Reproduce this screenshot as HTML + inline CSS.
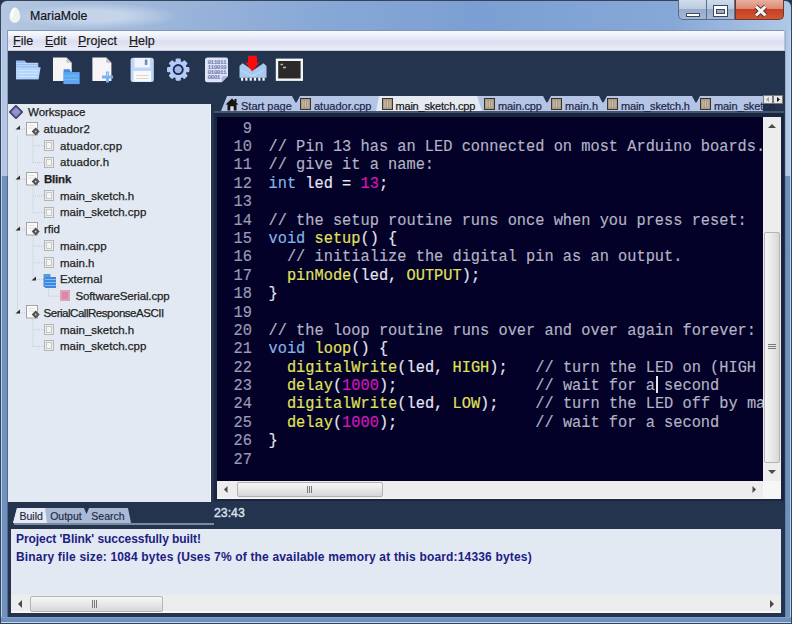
<!DOCTYPE html><html><head><meta charset="utf-8"><style>
*{margin:0;padding:0;box-sizing:border-box}
html,body{width:792px;height:624px;overflow:hidden;background:#24344f}
body{position:relative;font-family:"Liberation Sans",sans-serif}
.a{position:absolute}
.t{position:absolute;white-space:pre;line-height:16px}
#frame{left:0;top:0;width:792px;height:624px;background:linear-gradient(90deg,#b4c6e0 0%,#9cb6da 20%,#88a8d6 40%,#7c9fd3 60%,#86a8d8 85%,#b0c8e6 100%);border:1px solid #34445c;border-radius:7px 7px 0 0}
#sideL{left:1px;top:176px;width:7px;height:447px;background:linear-gradient(90deg,#b8d0f0 0,#b8d0f0 1px,#7292be 1.5px,#6e8ebb 5.5px,#56688a 6.5px)}
#sideLt{left:1px;top:30px;width:7px;height:146px;background:linear-gradient(90deg,#c4d6f0 0,#c4d6f0 1px,#b2c6e4 1.5px,#b6cae8 5.5px,#8898b8 6.5px)}
#sideR{left:785px;top:176px;width:6px;height:447px;background:linear-gradient(90deg,#56688a 0,#7292be 1px,#6e8ebb 4.5px,#b8d0f0 5px)}
#sideRt{left:785px;top:30px;width:6px;height:146px;background:linear-gradient(90deg,#8898b8 0,#b2c6e4 1px,#b6cae8 4.5px,#c4d6f0 5px)}
#sideB{left:1px;top:617px;width:790px;height:6px;background:linear-gradient(#8eaed8 0,#7292be 1px,#6e8ebb 4.5px,#c0d8f8 5px)}
#titleglow{left:10px;top:3px;width:170px;height:26px;background:radial-gradient(ellipse 50% 50% at center,rgba(210,222,238,.7) 40%,rgba(210,222,238,0) 100%)}
#menubar{left:8px;top:30px;width:776px;height:21px;background:linear-gradient(#f8fafd 0,#eef1f9 25%,#dcdff1 55%,#e2e5f3 80%,#eceef7 100%);border-top:1px solid #7f93b8;border-bottom:1px solid #c4cad8}
#navy{left:8px;top:51px;width:777px;height:566px;background:#24344f}
#tree{left:8px;top:104px;width:203px;height:398px;background:#e3e9f2;border-right:1px solid #f2f6fb}
#editorframe{left:214px;top:111px;width:570px;height:390px;background:#1a2540;border-top:2px solid #46536c}
#editor{left:217px;top:117px;width:546px;height:364px;background:#030128;overflow:hidden}
#output{left:11px;top:528.5px;width:770px;height:84.5px;background:#e3e9f2}
.code{position:absolute;left:0;white-space:pre;font-family:"Liberation Mono",monospace;font-size:15.33px;line-height:18.39px;color:#e6e6f0;transform:scaleY(1.1);transform-origin:0 0;-webkit-text-stroke:0.15px currentColor}
.ln{color:#9c9cb4}
.cm{color:#b4b4c4}
.kw{color:#82b6e6}
.fn{color:#e0e458}
.nu{color:#d816bc}
.tr{position:absolute;white-space:pre;font-size:11.5px;line-height:14px;color:#222;-webkit-text-stroke:0.25px #222}
.tab{position:absolute;top:96px;height:15px;background:#b3c3e3}
.tabt{position:absolute;white-space:pre;font-size:11px;line-height:13px;color:#1b2548;top:99.5px;-webkit-text-stroke:0.2px currentColor}
.sb{background:#ededed}
.thumbv{background:linear-gradient(90deg,#f4f4f4,#e8e8e8 50%,#d8d8d8);border:1px solid #b4b4b4;border-radius:2px}
.thumbh{background:linear-gradient(#f6f6f6,#e8e8e8 50%,#d6d6d6);border:1px solid #b4b4b4;border-radius:2px}
</style></head><body>
<div id="frame" class="a"></div>
<div id="titleglow" class="a"></div>
<svg class="a" style="left:8px;top:6px" width="14" height="18" viewBox="0 0 14 18"><path d="M7.5 1.5 C11 2.5 12.5 8 12 12 C11.5 15.5 9 17 6.5 16.8 C3 16.5 1.2 13.5 1.5 10 C1.8 6 4 1 7.5 1.5z" fill="#eef4ee"/><path d="M6.5 2.5 C3.5 3.5 2.5 8 2.8 10.5 C3.2 12.5 5 11 5.5 8 C6 5 8 3 6.5 2.5z" fill="#ffffff"/></svg>
<div class="t" style="left:30px;top:8px;font-size:12.3px;color:#10141c;-webkit-text-stroke:0.2px #10141c">MariaMole</div>
<div class="a" style="left:678px;top:0;width:29px;height:20px;border:1px solid #5a6c88;border-top:none;border-radius:0 0 0 5px;background:linear-gradient(#d0dcec,#bccbe0 45%,#97abcb 50%,#a4b8d6)"></div>
<div class="a" style="left:686px;top:12.5px;width:14px;height:4px;background:#fff;border:1px solid #3c4a60"></div>
<div class="a" style="left:706px;top:0;width:29px;height:20px;border:1px solid #5a6c88;border-top:none;background:linear-gradient(#d0dcec,#bccbe0 45%,#97abcb 50%,#a4b8d6)"></div>
<div class="a" style="left:713px;top:4.5px;width:15px;height:12px;border:1px solid #3c4a60;background:#fff"></div><div class="a" style="left:716px;top:8.5px;width:9px;height:5px;border:1px solid #3c4a60;background:#98aed0"></div>
<div class="a" style="left:735px;top:0;width:49px;height:20px;border:1px solid #6b3830;border-top:none;border-radius:0 0 5px 0;background:linear-gradient(#e8b0a0,#dc8a74 45%,#c84024 50%,#d0562e)"></div>
<svg class="a" style="left:752px;top:4px" width="17" height="14" viewBox="0 0 17 14"><path d="M4 2.5 L13.5 11.5 M13.5 2.5 L4 11.5" stroke="#4a2a24" stroke-width="4.6"/><path d="M4 2.5 L13.5 11.5 M13.5 2.5 L4 11.5" stroke="#f4f4f4" stroke-width="3"/></svg>
<div id="sideL" class="a"></div><div id="sideR" class="a"></div><div id="sideLt" class="a"></div><div id="sideRt" class="a"></div><div id="sideB" class="a"></div>
<div id="menubar" class="a"></div>
<div class="t" style="left:13px;top:33px;font-size:12.5px;color:#1a1a1a;-webkit-text-stroke:0.2px #1a1a1a"><u>F</u>ile</div>
<div class="t" style="left:45px;top:33px;font-size:12.5px;color:#1a1a1a;-webkit-text-stroke:0.2px #1a1a1a"><u>E</u>dit</div>
<div class="t" style="left:78px;top:33px;font-size:12.5px;color:#1a1a1a;-webkit-text-stroke:0.2px #1a1a1a"><u>P</u>roject</div>
<div class="t" style="left:129px;top:33px;font-size:12.5px;color:#1a1a1a;-webkit-text-stroke:0.2px #1a1a1a"><u>H</u>elp</div>
<div id="navy" class="a"></div>
<svg class="a" style="left:0;top:50px" width="310" height="40" viewBox="0 50 310 40">
<!-- open folder -->
<path d="M16 60.5 h8.5 l2.2 2.2 h11.6 v16.5 h-22.3z" fill="#98bef0"/>
<path d="M16.5 63.5 h21 M16.5 65.5 h21" stroke="#c8e0fc" stroke-width="0.8"/>
<path d="M16 67.3 h24.6 l-2 11.9 h-22.6z" fill="#b4d4fa"/>
<path d="M18 70.5 h20 M18 73.5 h19.5 M18 76.5 h19" stroke="#d4e8fe" stroke-width="0.8"/>
<!-- new project: page + folder -->
<path d="M53 57.5 h13.5 l5.2 5.2 v18.2 h-18.7z" fill="#f6f4f4"/>
<path d="M66.5 57.5 v5.2 h5.2z" fill="#c8c4cc"/>
<path d="M63.6 69.3 h6 l1.5 2.9 h8.4 v11.9 h-15.9z" fill="#3d8ae0"/>
<path d="M63.6 72.2 h15.9 v11.9 h-15.9z" fill="#5ea6f0"/>
<path d="M64.5 76 h14 M64.5 79.5 h14" stroke="#80bcf6" stroke-width="0.8"/>
<!-- new file: page + blue plus -->
<path d="M92.4 57.5 h13.8 l5.2 5.2 v18.2 h-19z" fill="#f6f4f6"/>
<path d="M106.2 57.5 v5.2 h5.2z" fill="#c4c0cc"/>
<path d="M106 71.5 h3 v4 h4 v3 h-4 v4 h-3 v-4 h-4 v-3 h4z" fill="#78b0f0"/><path d="M106.8 72.5 h1.4 v3.8 h-1.4z" fill="#b4d4fa"/>
<!-- floppy -->
<rect x="130.6" y="57.8" width="23.2" height="24.2" rx="2.5" fill="#c0d6f6"/>
<rect x="134.5" y="58" width="15.5" height="9.5" fill="#f0f4fe"/>
<rect x="144.8" y="59.5" width="2.6" height="5.5" fill="#7888a8"/>
<rect x="133.5" y="71" width="17.5" height="10.5" fill="#f6faff"/>
<path d="M136 75.5 h12.5 M136 78.5 h12.5" stroke="#e8c8b0" stroke-width="0.8"/>
<!-- gear -->
<g transform="translate(178.2 69.6)">
<g fill="#b4cbf8">
<circle r="8.6"/>
<rect x="-2.6" y="-11.2" width="5.2" height="22.4" rx="1.2"/>
<rect x="-2.6" y="-11.2" width="5.2" height="22.4" rx="1.2" transform="rotate(45)"/>
<rect x="-2.6" y="-11.2" width="5.2" height="22.4" rx="1.2" transform="rotate(90)"/>
<rect x="-2.6" y="-11.2" width="5.2" height="22.4" rx="1.2" transform="rotate(135)"/>
</g>
<circle r="4.6" fill="#a6b8d8" stroke="#142a66" stroke-width="1.8"/>
</g>
<!-- binary doc -->
<path d="M207.5 57.5 h18.5 q2 0 2 2 v16.5 l-6.3 6.3 h-14.2 q-2.5 0 -2.5 -2.5 v-19.8 q0 -2.5 2.5 -2.5z" fill="#dde4fa"/>
<path d="M228 76 h-4.5 q-1.8 0 -1.8 1.8 v4.5z" fill="#aeb8dc"/>
<g font-family="Liberation Mono" font-size="6.2px" font-weight="bold" fill="#7078a8" letter-spacing="-0.6">
<text x="207.5" y="63.5">011011</text><text x="207.5" y="68.5">110010</text><text x="207.5" y="73.5">010011</text><text x="207.5" y="78.5">0001</text>
</g>
<!-- upload chip -->
<path d="M239.5 66 l3 -2.7 l9.5 6.5 l2 0 l9.5 -6.5 l3 2.7 v11.7 h-27z" fill="#a8c8f0"/>
<path d="M240 70 l12 6 l12 -6" stroke="#c4dcf8" stroke-width="1" fill="none"/>
<path d="M249.5 55.8 h6 q1.5 0 1.5 1.5 v5.2 h2.3 l-7 8.9 l-7 -8.9 h2.7 v-5.2 q0 -1.5 1.5 -1.5z" fill="#fa0c0c"/>
<g fill="#f4f8ff"><rect x="241" y="77.7" width="2.2" height="3"/><rect x="245.3" y="77.7" width="2.2" height="3"/><rect x="249.6" y="77.7" width="2.2" height="3"/><rect x="253.9" y="77.7" width="2.2" height="3"/><rect x="258.2" y="77.7" width="2.2" height="3"/><rect x="262.5" y="77.7" width="2.2" height="3"/></g>
<!-- terminal -->
<rect x="277" y="59.8" width="24.8" height="19.9" fill="#2c2a28" stroke="#f2f4f8" stroke-width="2.4"/>
<path d="M280.5 64.5 h2.5 M283 67.5 h3" stroke="#b8b8b8" stroke-width="1.3"/>
</svg>
<div id="tree" class="a"></div>
<svg class="a" style="left:0;top:0" width="220" height="400" viewBox="0 0 220 400">
<path d="M17.5 135.5 V313.4" stroke="#c4c9d2" fill="none" stroke-dasharray="1 1"/>
<path d="M20 129.0 H26" stroke="#c4c9d2" fill="none" stroke-dasharray="1 1"/>
<path d="M20 179.2 H26" stroke="#c4c9d2" fill="none" stroke-dasharray="1 1"/>
<path d="M20 229.3 H26" stroke="#c4c9d2" fill="none" stroke-dasharray="1 1"/>
<path d="M20 312.9 H26" stroke="#c4c9d2" fill="none" stroke-dasharray="1 1"/>
<path d="M33 135.5 V162.5" stroke="#c4c9d2" fill="none" stroke-dasharray="1 1"/>
<path d="M33 145.7 H44" stroke="#c4c9d2" fill="none" stroke-dasharray="1 1"/>
<path d="M33 162.5 H44" stroke="#c4c9d2" fill="none" stroke-dasharray="1 1"/>
<path d="M33 185.7 V212.6" stroke="#c4c9d2" fill="none" stroke-dasharray="1 1"/>
<path d="M33 195.9 H44" stroke="#c4c9d2" fill="none" stroke-dasharray="1 1"/>
<path d="M33 212.6 H44" stroke="#c4c9d2" fill="none" stroke-dasharray="1 1"/>
<path d="M33 235.8 V279.5" stroke="#c4c9d2" fill="none" stroke-dasharray="1 1"/>
<path d="M33 246.1 H44" stroke="#c4c9d2" fill="none" stroke-dasharray="1 1"/>
<path d="M33 262.8 H44" stroke="#c4c9d2" fill="none" stroke-dasharray="1 1"/>
<path d="M33 279.5 H44" stroke="#c4c9d2" fill="none" stroke-dasharray="1 1"/>
<path d="M33 319.4 V346.4" stroke="#c4c9d2" fill="none" stroke-dasharray="1 1"/>
<path d="M33 329.7 H44" stroke="#c4c9d2" fill="none" stroke-dasharray="1 1"/>
<path d="M33 346.4 H44" stroke="#c4c9d2" fill="none" stroke-dasharray="1 1"/>
<path d="M48.5 287.0 V296.2 H60" stroke="#c4c9d2" fill="none" stroke-dasharray="1 1"/>
</svg>
<svg class="a" style="left:9px;top:104.8px" width="14" height="14" viewBox="0 0 14 14"><path d="M7 0.8 L13.2 7 L7 13.2 L0.8 7z" fill="#9292d6" stroke="#44466e" stroke-width="1.8"/></svg>
<div class="tr" style="left:28px;top:105.1px;font-weight:normal;letter-spacing:0px">Workspace</div>
<svg class="a" style="left:14.8px;top:125.2px" width="6" height="6" viewBox="0 0 6 6"><path d="M5 0.5 V4.5 H0.5z" fill="#2c2c2c"/></svg>
<svg class="a" style="left:26px;top:121.5px" width="15" height="15" viewBox="0 0 15 15">
<rect x="0.5" y="0.5" width="11" height="12.5" fill="#fafafa" stroke="#a4a4a4"/>
<path d="M2.5 3.5 h6 M2.5 6 h6" stroke="#e4dcdc"/>
<path d="M9.7 5.6 l4 4 l-4 4 l-4 -4z" fill="#505050"/><circle cx="9.7" cy="9.6" r="1" fill="#c8c8c8"/>
</svg>
<div class="tr" style="left:43.5px;top:121.8px;font-weight:normal;letter-spacing:0.15px">atuador2</div>
<svg class="a" style="left:44px;top:139.7px" width="10" height="11" viewBox="0 0 10 11">
<rect x="0.5" y="0.5" width="9" height="10" fill="#ececec" stroke="#b4b4b4"/>
<rect x="2.5" y="2.5" width="5" height="6" fill="#f4f4f4" stroke="#c8c8c8"/>
</svg>
<div class="tr" style="left:60px;top:138.5px;font-weight:normal;letter-spacing:0.2px">atuador.cpp</div>
<svg class="a" style="left:44px;top:156.5px" width="10" height="11" viewBox="0 0 10 11">
<rect x="0.5" y="0.5" width="9" height="10" fill="#ececec" stroke="#b4b4b4"/>
<rect x="2.5" y="2.5" width="5" height="6" fill="#f4f4f4" stroke="#c8c8c8"/>
</svg>
<div class="tr" style="left:60px;top:155.3px;font-weight:normal;letter-spacing:0.15px">atuador.h</div>
<svg class="a" style="left:14.8px;top:175.4px" width="6" height="6" viewBox="0 0 6 6"><path d="M5 0.5 V4.5 H0.5z" fill="#2c2c2c"/></svg>
<svg class="a" style="left:26px;top:171.7px" width="15" height="15" viewBox="0 0 15 15">
<rect x="0.5" y="0.5" width="11" height="12.5" fill="#fafafa" stroke="#a4a4a4"/>
<path d="M2.5 3.5 h6 M2.5 6 h6" stroke="#e4dcdc"/>
<path d="M9.7 5.6 l4 4 l-4 4 l-4 -4z" fill="#505050"/><circle cx="9.7" cy="9.6" r="1" fill="#c8c8c8"/>
</svg>
<div class="tr" style="left:44px;top:172.0px;font-weight:bold;letter-spacing:-0.2px">Blink</div>
<svg class="a" style="left:44px;top:189.9px" width="10" height="11" viewBox="0 0 10 11">
<rect x="0.5" y="0.5" width="9" height="10" fill="#ececec" stroke="#b4b4b4"/>
<rect x="2.5" y="2.5" width="5" height="6" fill="#f4f4f4" stroke="#c8c8c8"/>
</svg>
<div class="tr" style="left:60px;top:188.7px;font-weight:normal;letter-spacing:0px">main_sketch.h</div>
<svg class="a" style="left:44px;top:206.6px" width="10" height="11" viewBox="0 0 10 11">
<rect x="0.5" y="0.5" width="9" height="10" fill="#ececec" stroke="#b4b4b4"/>
<rect x="2.5" y="2.5" width="5" height="6" fill="#f4f4f4" stroke="#c8c8c8"/>
</svg>
<div class="tr" style="left:60px;top:205.4px;font-weight:normal;letter-spacing:0px">main_sketch.cpp</div>
<svg class="a" style="left:14.8px;top:225.5px" width="6" height="6" viewBox="0 0 6 6"><path d="M5 0.5 V4.5 H0.5z" fill="#2c2c2c"/></svg>
<svg class="a" style="left:26px;top:221.8px" width="15" height="15" viewBox="0 0 15 15">
<rect x="0.5" y="0.5" width="11" height="12.5" fill="#fafafa" stroke="#a4a4a4"/>
<path d="M2.5 3.5 h6 M2.5 6 h6" stroke="#e4dcdc"/>
<path d="M9.7 5.6 l4 4 l-4 4 l-4 -4z" fill="#505050"/><circle cx="9.7" cy="9.6" r="1" fill="#c8c8c8"/>
</svg>
<div class="tr" style="left:44px;top:222.1px;font-weight:normal;letter-spacing:0px">rfid</div>
<svg class="a" style="left:44px;top:240.1px" width="10" height="11" viewBox="0 0 10 11">
<rect x="0.5" y="0.5" width="9" height="10" fill="#ececec" stroke="#b4b4b4"/>
<rect x="2.5" y="2.5" width="5" height="6" fill="#f4f4f4" stroke="#c8c8c8"/>
</svg>
<div class="tr" style="left:60px;top:238.9px;font-weight:normal;letter-spacing:0px">main.cpp</div>
<svg class="a" style="left:44px;top:256.8px" width="10" height="11" viewBox="0 0 10 11">
<rect x="0.5" y="0.5" width="9" height="10" fill="#ececec" stroke="#b4b4b4"/>
<rect x="2.5" y="2.5" width="5" height="6" fill="#f4f4f4" stroke="#c8c8c8"/>
</svg>
<div class="tr" style="left:60px;top:255.6px;font-weight:normal;letter-spacing:0px">main.h</div>
<svg class="a" style="left:31px;top:275.7px" width="6" height="6" viewBox="0 0 6 6"><path d="M5 0.5 V4.5 H0.5z" fill="#2c2c2c"/></svg>
<svg class="a" style="left:43px;top:273.5px" width="14" height="15" viewBox="0 0 14 15">
<rect x="0.5" y="0" width="7" height="4" fill="#5a9ad8"/>
<rect x="2" y="3" width="11" height="11" fill="#3f86e0"/>
<path d="M2 5.5 h11 M2 8.5 h11 M2 11.5 h11" stroke="#8cc0f4" stroke-width="0.9"/>
<rect x="0.5" y="4" width="1.5" height="9" fill="#4a8ad8"/>
</svg>
<div class="tr" style="left:60px;top:272.3px;font-weight:normal;letter-spacing:0px">External</div>
<svg class="a" style="left:60px;top:290.2px" width="10" height="11" viewBox="0 0 10 11"><rect x="0" y="0" width="10" height="11" fill="#e0a0b8"/><rect x="2" y="2" width="6" height="7" fill="#d888a8"/></svg>
<div class="tr" style="left:75.5px;top:289.0px;font-weight:normal;letter-spacing:-0.14px">SoftwareSerial.cpp</div>
<svg class="a" style="left:14.8px;top:309.1px" width="6" height="6" viewBox="0 0 6 6"><path d="M5 0.5 V4.5 H0.5z" fill="#2c2c2c"/></svg>
<svg class="a" style="left:26px;top:305.4px" width="15" height="15" viewBox="0 0 15 15">
<rect x="0.5" y="0.5" width="11" height="12.5" fill="#fafafa" stroke="#a4a4a4"/>
<path d="M2.5 3.5 h6 M2.5 6 h6" stroke="#e4dcdc"/>
<path d="M9.7 5.6 l4 4 l-4 4 l-4 -4z" fill="#505050"/><circle cx="9.7" cy="9.6" r="1" fill="#c8c8c8"/>
</svg>
<div class="tr" style="left:43.5px;top:305.7px;font-weight:normal;letter-spacing:-0.47px">SerialCallResponseASCII</div>
<svg class="a" style="left:44px;top:323.7px" width="10" height="11" viewBox="0 0 10 11">
<rect x="0.5" y="0.5" width="9" height="10" fill="#ececec" stroke="#b4b4b4"/>
<rect x="2.5" y="2.5" width="5" height="6" fill="#f4f4f4" stroke="#c8c8c8"/>
</svg>
<div class="tr" style="left:60px;top:322.5px;font-weight:normal;letter-spacing:0px">main_sketch.h</div>
<svg class="a" style="left:44px;top:340.4px" width="10" height="11" viewBox="0 0 10 11">
<rect x="0.5" y="0.5" width="9" height="10" fill="#ececec" stroke="#b4b4b4"/>
<rect x="2.5" y="2.5" width="5" height="6" fill="#f4f4f4" stroke="#c8c8c8"/>
</svg>
<div class="tr" style="left:60px;top:339.2px;font-weight:normal;letter-spacing:0px">main_sketch.cpp</div>
<div id="editorframe" class="a"></div>
<div class="a" style="left:221px;top:96px;width:542px;height:15px;background:#b4c4e4;clip-path:polygon(0 100%,6px 0,100% 0,100% 100%)"></div>
<div class="a" style="left:376px;top:96px;width:106px;height:15px;background:#e5e9f1;clip-path:polygon(0 100%,3px 0,101px 0,100% 100%)"></div>
<svg class="a" style="left:291.5px;top:96px" width="8" height="7" viewBox="0 0 8 7"><path d="M0 0 H8 L4.5 6.5 H3.5z" fill="#24344f"/></svg>
<svg class="a" style="left:542.5px;top:96px" width="8" height="7" viewBox="0 0 8 7"><path d="M0 0 H8 L4.5 6.5 H3.5z" fill="#24344f"/></svg>
<svg class="a" style="left:598.5px;top:96px" width="8" height="7" viewBox="0 0 8 7"><path d="M0 0 H8 L4.5 6.5 H3.5z" fill="#24344f"/></svg>
<svg class="a" style="left:691.5px;top:96px" width="8" height="7" viewBox="0 0 8 7"><path d="M0 0 H8 L4.5 6.5 H3.5z" fill="#24344f"/></svg>
<div class="tabt" style="left:241px;color:#1b2548;letter-spacing:0px">Start page</div>
<svg class="a" style="left:225px;top:98px" width="14" height="13" viewBox="0 0 14 13"><path d="M7 0.5 L13.5 6.5 H11.5 V12.5 H8.5 V8.5 H5.5 V12.5 H2.5 V6.5 H0.5z" fill="#141414"/><rect x="9.5" y="1" width="2" height="3" fill="#141414"/><rect x="5.5" y="8.5" width="3" height="4" fill="#d8d8e8"/></svg>
<div class="tabt" style="left:314px;color:#1b2548;letter-spacing:0px">atuador.cpp</div>
<svg class="a" style="left:300px;top:98px" width="11" height="12" viewBox="0 0 11 12"><rect x="0.5" y="0.5" width="10" height="11" fill="#a89a84" stroke="#3c3428"/><path d="M3 2.5 v7 M5.5 2.5 v7 M8 2.5 v7" stroke="#d8d0c0" stroke-width="0.8"/></svg>
<div class="tabt" style="left:395.5px;color:#141414;letter-spacing:-0.2px">main_sketch.cpp</div>
<svg class="a" style="left:381.5px;top:98px" width="11" height="12" viewBox="0 0 11 12"><rect x="0.5" y="0.5" width="10" height="11" fill="#a89a84" stroke="#3c3428"/><path d="M3 2.5 v7 M5.5 2.5 v7 M8 2.5 v7" stroke="#d8d0c0" stroke-width="0.8"/></svg>
<div class="tabt" style="left:498px;color:#1b2548;letter-spacing:-0.1px">main.cpp</div>
<svg class="a" style="left:484px;top:98px" width="11" height="12" viewBox="0 0 11 12"><rect x="0.5" y="0.5" width="10" height="11" fill="#a89a84" stroke="#3c3428"/><path d="M3 2.5 v7 M5.5 2.5 v7 M8 2.5 v7" stroke="#d8d0c0" stroke-width="0.8"/></svg>
<div class="tabt" style="left:565px;color:#1b2548;letter-spacing:0px">main.h</div>
<svg class="a" style="left:551px;top:98px" width="11" height="12" viewBox="0 0 11 12"><rect x="0.5" y="0.5" width="10" height="11" fill="#a89a84" stroke="#3c3428"/><path d="M3 2.5 v7 M5.5 2.5 v7 M8 2.5 v7" stroke="#d8d0c0" stroke-width="0.8"/></svg>
<div class="tabt" style="left:621px;color:#1b2548;letter-spacing:-0.17px">main_sketch.h</div>
<svg class="a" style="left:607px;top:98px" width="11" height="12" viewBox="0 0 11 12"><rect x="0.5" y="0.5" width="10" height="11" fill="#a89a84" stroke="#3c3428"/><path d="M3 2.5 v7 M5.5 2.5 v7 M8 2.5 v7" stroke="#d8d0c0" stroke-width="0.8"/></svg>
<div class="tabt" style="left:714px;color:#1b2548;letter-spacing:-0.1px">main_sketch</div>
<svg class="a" style="left:700px;top:98px" width="11" height="12" viewBox="0 0 11 12"><rect x="0.5" y="0.5" width="10" height="11" fill="#a89a84" stroke="#3c3428"/><path d="M3 2.5 v7 M5.5 2.5 v7 M8 2.5 v7" stroke="#d8d0c0" stroke-width="0.8"/></svg>
<div class="a" style="left:763px;top:95px;width:10px;height:9px;background:#e8e8e8;border:1px solid #7a7a7a"></div>
<div class="a" style="left:773px;top:95px;width:10px;height:9px;background:#e8e8e8;border:1px solid #7a7a7a"></div>
<svg class="a" style="left:763px;top:95px" width="20" height="9" viewBox="0 0 20 9"><path d="M3 4.5 L6 2 V7z" fill="#9a9a9a"/><path d="M17 4.5 L14 2 V7z" fill="#141414"/></svg>
<div id="editor" class="a">
<div class="code ln" style="top:1.60px;left:0;width:35px;text-align:right">9</div>
<div class="code" style="top:1.60px;left:51.5px"></div>
<div class="code ln" style="top:19.99px;left:0;width:35px;text-align:right">10</div>
<div class="code" style="top:19.99px;left:51.5px"><span class="cm">// Pin 13 has an LED connected on most Arduino boards.</span></div>
<div class="code ln" style="top:38.38px;left:0;width:35px;text-align:right">11</div>
<div class="code" style="top:38.38px;left:51.5px"><span class="cm">// give it a name:</span></div>
<div class="code ln" style="top:56.77px;left:0;width:35px;text-align:right">12</div>
<div class="code" style="top:56.77px;left:51.5px"><span class="kw">int</span> led = <span class="nu">13</span>;</div>
<div class="code ln" style="top:75.16px;left:0;width:35px;text-align:right">13</div>
<div class="code" style="top:75.16px;left:51.5px"></div>
<div class="code ln" style="top:93.55px;left:0;width:35px;text-align:right">14</div>
<div class="code" style="top:93.55px;left:51.5px"><span class="cm">// the setup routine runs once when you press reset:</span></div>
<div class="code ln" style="top:111.94px;left:0;width:35px;text-align:right">15</div>
<div class="code" style="top:111.94px;left:51.5px"><span class="kw">void</span> <span class="fn">setup</span>() {</div>
<div class="code ln" style="top:130.33px;left:0;width:35px;text-align:right">16</div>
<div class="code" style="top:130.33px;left:51.5px">  <span class="cm">// initialize the digital pin as an output.</span></div>
<div class="code ln" style="top:148.72px;left:0;width:35px;text-align:right">17</div>
<div class="code" style="top:148.72px;left:51.5px">  <span class="fn">pinMode</span>(led, <span class="fn">OUTPUT</span>);</div>
<div class="code ln" style="top:167.11px;left:0;width:35px;text-align:right">18</div>
<div class="code" style="top:167.11px;left:51.5px">}</div>
<div class="code ln" style="top:185.50px;left:0;width:35px;text-align:right">19</div>
<div class="code" style="top:185.50px;left:51.5px"></div>
<div class="code ln" style="top:203.89px;left:0;width:35px;text-align:right">20</div>
<div class="code" style="top:203.89px;left:51.5px"><span class="cm">// the loop routine runs over and over again forever:</span></div>
<div class="code ln" style="top:222.28px;left:0;width:35px;text-align:right">21</div>
<div class="code" style="top:222.28px;left:51.5px"><span class="kw">void</span> <span class="fn">loop</span>() {</div>
<div class="code ln" style="top:240.67px;left:0;width:35px;text-align:right">22</div>
<div class="code" style="top:240.67px;left:51.5px">  <span class="fn">digitalWrite</span>(led, <span class="fn">HIGH</span>);   <span class="cm">// turn the LED on (HIGH is the voltage level)</span></div>
<div class="code ln" style="top:259.06px;left:0;width:35px;text-align:right">23</div>
<div class="code" style="top:259.06px;left:51.5px">  <span class="fn">delay</span>(<span class="nu">1000</span>);               <span class="cm">// wait for a second</span></div>
<div class="code ln" style="top:277.45px;left:0;width:35px;text-align:right">24</div>
<div class="code" style="top:277.45px;left:51.5px">  <span class="fn">digitalWrite</span>(led, <span class="fn">LOW</span>);    <span class="cm">// turn the LED off by making the voltage LOW</span></div>
<div class="code ln" style="top:295.84px;left:0;width:35px;text-align:right">25</div>
<div class="code" style="top:295.84px;left:51.5px">  <span class="fn">delay</span>(<span class="nu">1000</span>);               <span class="cm">// wait for a second</span></div>
<div class="code ln" style="top:314.23px;left:0;width:35px;text-align:right">26</div>
<div class="code" style="top:314.23px;left:51.5px">}</div>
<div class="code ln" style="top:332.62px;left:0;width:35px;text-align:right">27</div>
<div class="code" style="top:332.62px;left:51.5px"></div>
<div class="a" style="left:439px;top:259px;width:2px;height:17px;background:#e8e8f0"></div>
</div>
<div class="a sb" style="left:763px;top:117px;width:18px;height:364px"></div>
<svg class="a" style="left:763px;top:117px" width="18" height="18" viewBox="0 0 18 18"><path d="M5 11 L9 7 L13 11z" fill="#4a4a4a"/></svg>
<div class="a thumbv" style="left:764px;top:232px;width:16px;height:231px"></div>
<svg class="a" style="left:764px;top:342px" width="16" height="10" viewBox="0 0 16 10"><path d="M4 2.5 h8 M4 4.5 h8 M4 6.5 h8" stroke="#7a7a7a"/></svg>
<svg class="a" style="left:763px;top:463px" width="18" height="18" viewBox="0 0 18 18"><path d="M5 7 L9 11 L13 7z" fill="#4a4a4a"/></svg>
<div class="a sb" style="left:217px;top:481px;width:564px;height:18px;border-bottom:1px solid #f8f8fa"></div>
<svg class="a" style="left:217px;top:481px" width="18" height="17" viewBox="0 0 18 17"><path d="M10.5 5 L7 8.5 L10.5 12z" fill="#4a4a4a"/></svg>
<div class="a thumbh" style="left:237px;top:482px;width:146px;height:15px"></div>
<svg class="a" style="left:304px;top:482px" width="12" height="15" viewBox="0 0 12 15"><path d="M3.5 4 v7 M5.5 4 v7 M7.5 4 v7" stroke="#7a7a7a"/></svg>
<svg class="a" style="left:745px;top:481px" width="18" height="17" viewBox="0 0 18 17"><path d="M7.5 5 L11 8.5 L7.5 12z" fill="#4a4a4a"/></svg>
<div class="a" style="left:763px;top:481px;width:18px;height:18px;background:#f6f6f6"></div>
<div class="a" style="left:13px;top:508px;width:118px;height:15px;background:#a9b9d6;clip-path:polygon(0 100%,4px 0,115px 0,100% 100%)"></div>
<div class="a" style="left:13px;top:508px;width:34px;height:15px;background:#e6eaf2;clip-path:polygon(0 100%,4px 0,32px 0,100% 100%)"></div>
<svg class="a" style="left:84px;top:508px" width="6" height="6" viewBox="0 0 6 6"><path d="M0 0 H5 L2.8 5.5 H2.2z" fill="#24344f"/></svg>
<div class="tabt" style="left:19.5px;top:510px;font-size:10.5px;color:#1e2844;-webkit-text-stroke:0.15px #1e2844">Build</div>
<div class="tabt" style="left:50.2px;top:510px;font-size:10.5px;color:#1e2844;-webkit-text-stroke:0.15px #1e2844">Output</div>
<div class="tabt" style="left:91.3px;top:510px;font-size:10.5px;color:#1e2844;-webkit-text-stroke:0.15px #1e2844">Search</div>
<div class="a" style="left:14px;top:523px;width:200px;height:2px;background:#7c889e"></div>
<div class="t" style="left:214px;top:505px;font-size:13.5px;color:#dde1ea;-webkit-text-stroke:0.4px #dde1ea;transform:scaleX(0.91);transform-origin:0 0">23:43</div>
<div id="output" class="a"></div>
<div class="t" style="left:16px;top:531px;font-size:12px;font-weight:bold;color:#1c2084;letter-spacing:-0.06px">Project 'Blink' successfully built!</div>
<div class="t" style="left:16px;top:548.5px;font-size:12px;font-weight:bold;color:#1c2084;letter-spacing:0.17px">Binary file size: 1084 bytes (Uses 7% of the available memory at this board:14336 bytes)</div>
<div class="a sb" style="left:11px;top:595px;width:770px;height:18px;border-bottom:2px solid #f6f8fc"></div>
<svg class="a" style="left:11px;top:595px" width="18" height="18" viewBox="0 0 18 18"><path d="M11 5 L7 9 L11 13z" fill="#4a4a4a"/></svg>
<div class="a thumbh" style="left:30px;top:596px;width:133px;height:16px"></div>
<svg class="a" style="left:89px;top:596px" width="12" height="16" viewBox="0 0 12 16"><path d="M3.5 4 v8 M5.5 4 v8 M7.5 4 v8" stroke="#7a7a7a"/></svg>
<svg class="a" style="left:763px;top:595px" width="18" height="18" viewBox="0 0 18 18"><path d="M7 5 L11 9 L7 13z" fill="#4a4a4a"/></svg>
</body></html>
